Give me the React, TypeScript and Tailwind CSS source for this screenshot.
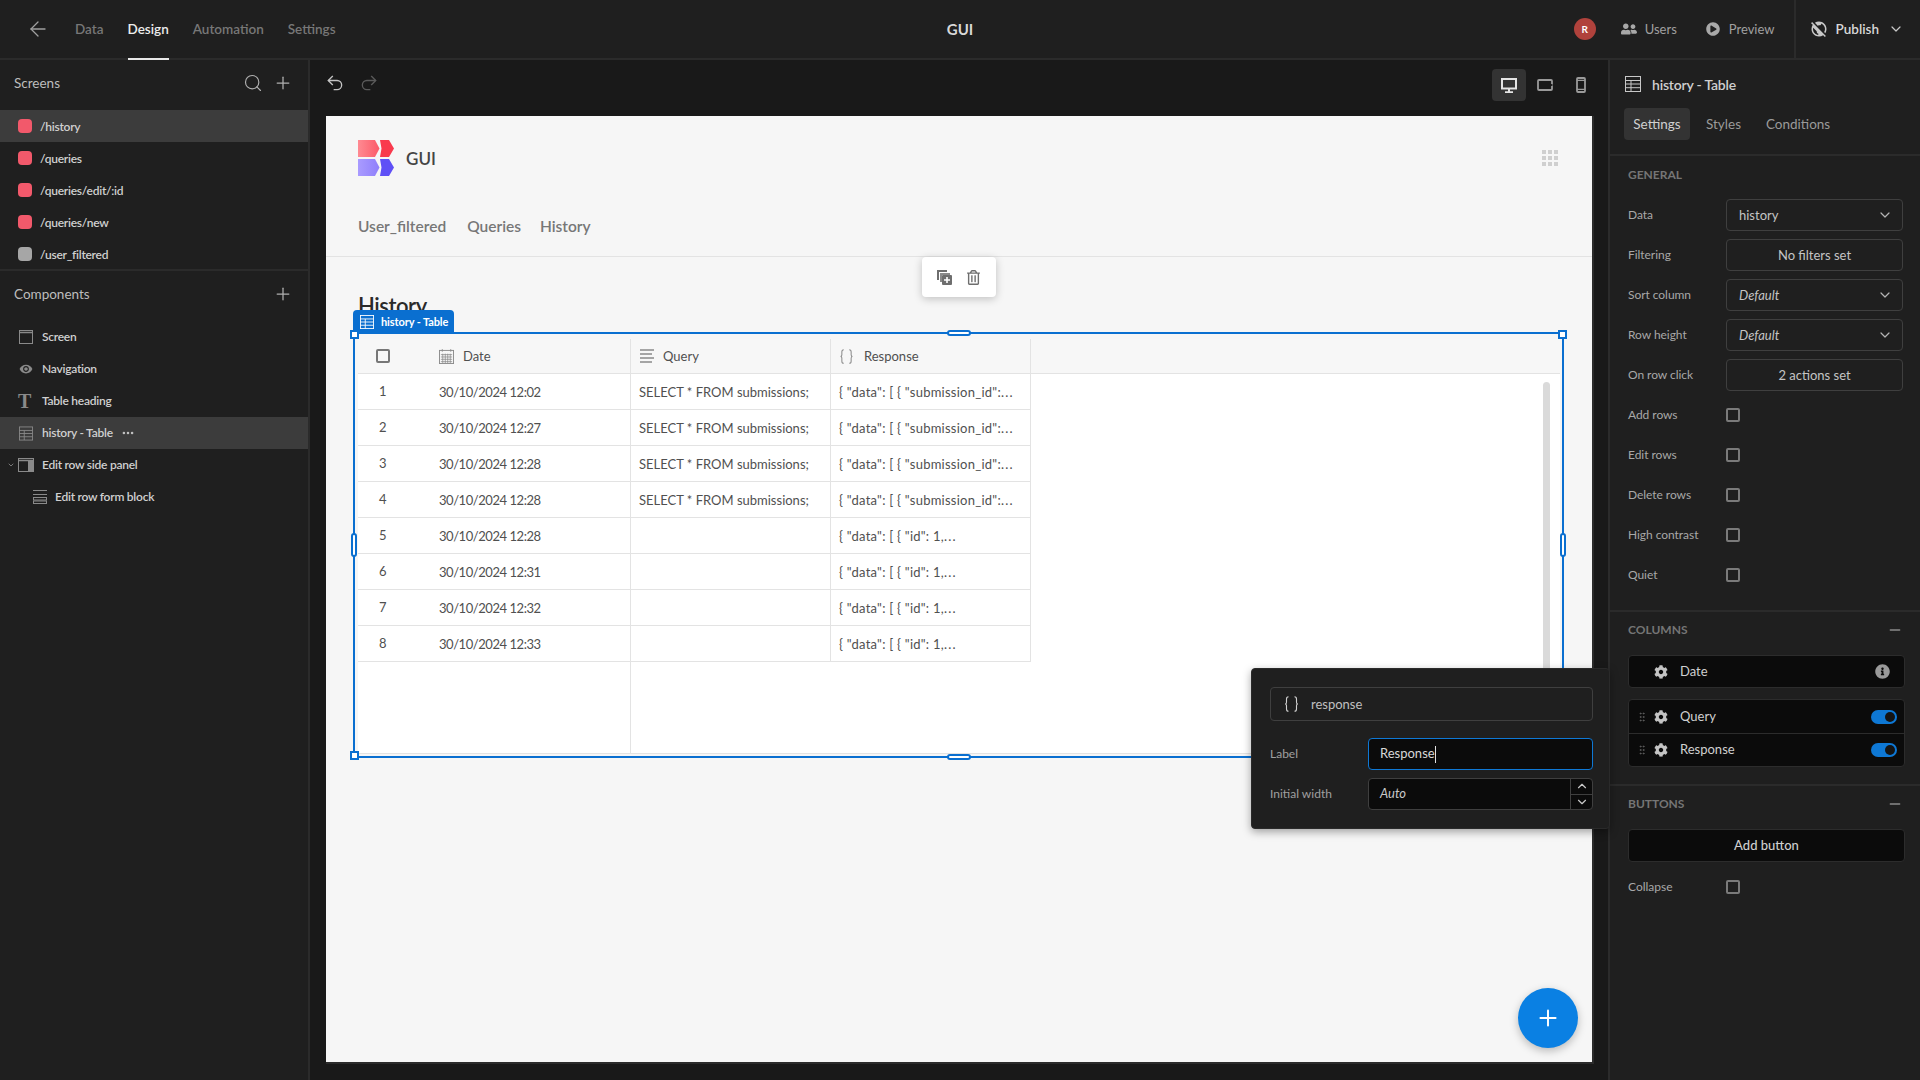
import React from "react";
import { ArrowLeft, Search, Plus, Undo2, Redo2, ChevronDown, ChevronUp, Minus, GripVertical, MoreHorizontal } from "lucide-react";
import { FaCog, FaInfoCircle, FaUserFriends, FaPlayCircle, FaRegTrashAlt } from "react-icons/fa";
import { MdPublicOff, MdVisibility } from "react-icons/md";

const TableIcon = ({ className = "" }: { className?: string }) => (
  <svg viewBox="0 0 16 16" className={className} fill="none" stroke="currentColor" strokeWidth="1">
    <rect x="0.5" y="0.5" width="15" height="15" />
    <path d="M0.5 4.5H15.5M0.5 8H15.5M0.5 11.7H15.5M6 4.5V15.5" />
  </svg>
);
const Calendar = () => (
  <svg viewBox="0 0 16 16" className="w-[15px] h-[15px] text-[#8a8a8a]" fill="none" stroke="currentColor" strokeWidth="1">
    <rect x="0.5" y="1.5" width="15" height="14" />
    <path d="M3.5 0V3M12.5 0V3M2 6H14M2 8.5H14M2 11H14M2 13.5H14M4 5V15M6.7 5V15M9.3 5V15M12 5V15" strokeWidth="0.8" />
  </svg>
);
const Lines = () => (
  <svg viewBox="0 0 14 14" className="w-[14px] h-[14px] text-[#8a8a8a]" fill="none" stroke="currentColor" strokeWidth="1.4">
    <path d="M0 1H14M0 5H12M0 9H14M0 13H12" />
  </svg>
);
const Braces = ({ className = "" }: { className?: string }) => (
  <svg viewBox="0 0 14 16" className={className} fill="none" stroke="currentColor" strokeWidth="1.1">
    <path d="M4 0.7C2 0.7 2 1.5 2 3V6.2C2 7.2 1.6 8 0.6 8C1.6 8 2 8.8 2 9.8V13C2 14.5 2 15.3 4 15.3M10 0.7C12 0.7 12 1.5 12 3V6.2C12 7.2 12.4 8 13.4 8C12.4 8 12 8.8 12 9.8V13C12 14.5 12 15.3 10 15.3" />
  </svg>
);
const Logo = () => (
  <svg viewBox="0 0 36 36" className="w-9 h-9 shrink-0">
    <defs>
      <linearGradient id="lr" x1="0" x2="1"><stop offset="0" stopColor="#ff8a92" /><stop offset="1" stopColor="#fb5a68" /></linearGradient>
      <linearGradient id="lp" x1="0" x2="1"><stop offset="0" stopColor="#a99bff" /><stop offset="1" stopColor="#8f7ffb" /></linearGradient>
    </defs>
    <path d="M0 0H17L21.5 8.5L17 17H0Z" fill="url(#lr)" />
    <path d="M22 0H31L36 8.5L31 17H22L23.5 8.5Z" fill="#f93a4d" />
    <path d="M0 19H17L21.5 27.5L17 36H0Z" fill="url(#lp)" />
    <path d="M22 19H31L36 27.5L31 36H22L23.5 27.5Z" fill="#5f50f6" />
  </svg>
);
const Check = () => <div className="w-[14px] h-[14px] rounded-[2px] border-2 border-[#7a7a7a]" />;

const screens = [
  ["/history", "bg-[#f2596b]", true],
  ["/queries", "bg-[#f2596b]", false],
  ["/queries/edit/:id", "bg-[#f2596b]", false],
  ["/queries/new", "bg-[#f2596b]", false],
  ["/user_filtered", "bg-[#a6a6a6]", false],
] as const;

const rows = [
  ["1", "30/10/2024 12:02", true], ["2", "30/10/2024 12:27", true], ["3", "30/10/2024 12:28", true], ["4", "30/10/2024 12:28", true],
  ["5", "30/10/2024 12:28", false], ["6", "30/10/2024 12:31", false], ["7", "30/10/2024 12:32", false], ["8", "30/10/2024 12:33", false],
] as const;

const Field = ({ label, children }: { label: string; children: React.ReactNode }) => (
  <div className="flex items-center h-8">
    <div className="w-[98px] text-[12px] text-[#a8a8a8] tracking-[-0.05px]">{label}</div>
    {children}
  </div>
);
const Box = ({ children, center }: { children: React.ReactNode; center?: boolean }) => (
  <div className={`w-[177px] h-8 rounded border border-[#3f3f3f] flex items-center px-3 text-[13px] text-[#c4c4c4] ${center ? "justify-center" : "justify-between"}`}>{children}</div>
);
const Chev = () => <ChevronDown className="w-4 h-4 text-[#b4b4b4] mr-[-3px]" strokeWidth={1.8} />;
const Toggle = () => (
  <div className="w-[26px] h-[14px] rounded-full bg-[#0e78d5] flex items-center justify-end pr-[2px]">
    <div className="w-[10px] h-[10px] rounded-full bg-[#141414]" />
  </div>
);
const Handle = ({ className }: { className: string }) => <div className={`absolute bg-white border-2 border-[#0a6fd0] ${className}`} />;
const SideLabel = ({ children, className = "" }: { children: React.ReactNode; className?: string }) => (
  <span className={`text-[12px] tracking-[-0.25px] ${className}`}>{children}</span>
);

export default function App() {
  return (
    <div className="relative w-[1920px] h-[1080px] overflow-hidden flex flex-col bg-[#1f1f1f] font-['Lato',sans-serif] text-[#c8c8c8]">
      {/* top bar */}
      <header className="relative h-[60px] shrink-0 flex items-center border-b-2 border-[#2b2b2b] text-[14px]">
        <ArrowLeft className="ml-[26px] w-6 h-6 text-[#a0a0a0]" strokeWidth={1.3} />
        <nav className="flex ml-[25px] h-full items-center gap-[24px] font-semibold text-[#777] text-[13.5px]">
          <span>Data</span>
          <span className="relative h-full flex items-center text-[#ededed]">
            Design
            <span className="absolute left-0 right-0 bottom-[-2px] h-[2px] bg-[#e8e8e8]" />
          </span>
          <span>Automation</span>
          <span>Settings</span>
        </nav>
        <div className="absolute left-0 right-0 text-center font-bold text-[15px] text-[#d8d8d8] pointer-events-none">GUI</div>
        <div className="ml-auto flex items-center h-full">
          <div className="w-[22px] h-[22px] rounded-full bg-[#b0423c] text-white text-[10px] font-bold flex items-center justify-center">R</div>
          <FaUserFriends className="ml-[25px] w-[16px] h-[16px] text-[#a8a8a8]" />
          <span className="ml-[8px] mt-[1px] text-[13px] text-[#a0a0a0]">Users</span>
          <FaPlayCircle className="ml-[29px] w-[14px] h-[14px] text-[#a8a8a8]" />
          <span className="ml-[9px] mt-[1px] text-[13px] text-[#a0a0a0]">Preview</span>
          <div className="ml-[19px] h-full w-[2px] bg-[#2b2b2b]" />
          <MdPublicOff className="ml-[14px] w-[18px] h-[18px] text-[#c8c8c8]" />
          <span className="ml-[8px] text-[13.5px] font-semibold text-[#d8d8d8]">Publish</span>
          <ChevronDown className="ml-[9px] mr-[16px] w-4 h-4 text-[#c8c8c8]" strokeWidth={1.8} />
        </div>
      </header>

      <div className="flex flex-1 min-h-0">
        {/* left sidebar */}
        <aside className="w-[310px] shrink-0 border-r-2 border-[#2b2b2b] flex flex-col">
          <div className="h-[50px] flex items-center pl-[14px] pr-[15px] pb-[4px]">
            <span className="text-[13.5px] text-[#bdbdbd]">Screens</span>
            <Search className="ml-auto w-5 h-5 text-[#b0b0b0]" strokeWidth={1.4} />
            <Plus className="ml-[10px] w-5 h-5 text-[#b0b0b0]" strokeWidth={1.5} />
          </div>
          {screens.map(([name, color, active]) => (
            <div key={name} className={`h-8 flex items-center pl-[18px] font-semibold text-[#d0d0d0] ${active ? "bg-[#3c3c3c]" : ""}`}>
              <div className={`w-[14px] h-[14px] rounded-[4px] ${color}`} />
              <SideLabel className="ml-[8px] mt-[1px]">{name}</SideLabel>
            </div>
          ))}
          <div className="h-[2px] bg-[#2b2b2b] mt-[-1px]" />
          <div className="h-[50px] flex items-center pl-[14px] pr-[15px] pb-[4px]">
            <span className="text-[13.5px] text-[#bdbdbd]">Components</span>
            <Plus className="ml-auto w-5 h-5 text-[#b0b0b0]" strokeWidth={1.5} />
          </div>
          <div className="flex flex-col font-semibold text-[#d0d0d0]">
            <div className="h-8 flex items-center pl-[19px]">
              <svg viewBox="0 0 14 14" className="w-[14px] h-[14px] text-[#8a8a8a]" fill="none" stroke="currentColor"><rect x="0.5" y="0.5" width="13" height="13" /><path d="M0.5 2.5H13.5" strokeWidth="1.5" /></svg>
              <SideLabel className="ml-[9px]">Screen</SideLabel>
            </div>
            <div className="h-8 flex items-center pl-[19px]">
              <MdVisibility className="w-[14px] h-[14px] text-[#8a8a8a]" />
              <SideLabel className="ml-[9px]">Navigation</SideLabel>
            </div>
            <div className="h-8 flex items-center pl-[18px]">
              <span className="w-[15px] text-[20px] leading-none font-bold text-[#8a8a8a] font-['Liberation_Serif',serif]">T</span>
              <SideLabel className="ml-[9px]">Table heading</SideLabel>
            </div>
            <div className="h-8 flex items-center pl-[19px] bg-[#3c3c3c]">
              <TableIcon className="w-[14px] h-[15px] text-[#8a8a8a]" />
              <SideLabel className="ml-[9px]">history - Table</SideLabel>
              <MoreHorizontal className="ml-[8px] w-[14px] h-[14px] text-[#c0c0c0]" strokeWidth={2.4} />
            </div>
            <div className="relative h-8 flex items-center pl-[18px]">
              <ChevronDown className="absolute left-[7px] w-[8px] h-[8px] text-[#8a8a8a]" strokeWidth={2.5} />
              <svg viewBox="0 0 16 14" className="w-[16px] h-[14px] text-[#8a8a8a]" fill="none" stroke="currentColor"><rect x="0.5" y="0.5" width="15" height="13" /><path d="M0.5 2.5H15.5" strokeWidth="1.5" /><rect x="10.5" y="3" width="5" height="10.5" fill="currentColor" /></svg>
              <SideLabel className="ml-[8px]">Edit row side panel</SideLabel>
            </div>
            <div className="h-8 flex items-center pl-[33px]">
              <svg viewBox="0 0 14 14" className="w-[14px] h-[14px] text-[#8a8a8a]" fill="none" stroke="currentColor"><path d="M0 0.5H14M0 4.5H14" /><rect x="0.5" y="7.5" width="13" height="2.5" /><rect x="0.5" y="11" width="13" height="2.5" /></svg>
              <SideLabel className="ml-[8px]">Edit row form block</SideLabel>
            </div>
          </div>
        </aside>

        {/* canvas */}
        <main className="flex-1 min-w-0 bg-[#191919] flex flex-col">
          <div className="h-[56px] shrink-0 flex items-center pl-[15px] pr-[15px] pb-[6px]">
            <Undo2 className="w-5 h-5 mt-[-4px] text-[#c4c4c4]" strokeWidth={1.6} />
            <Redo2 className="ml-[14px] w-5 h-5 mt-[-4px] text-[#5a5a5a]" strokeWidth={1.6} />
            <div className="ml-auto w-[34px] h-8 rounded bg-[#333] flex items-center justify-center">
              <svg viewBox="0 0 16 15" className="w-4 h-[15px] text-[#e4e4e4]" fill="none" stroke="currentColor"><rect x="1" y="1" width="14" height="9.5" strokeWidth="2" /><path d="M8 11V14M4 14.2H12" strokeWidth="2" /></svg>
            </div>
            <svg viewBox="0 0 16 12" className="ml-[11px] w-4 h-3 text-[#9a9a9a]" fill="none" stroke="currentColor"><rect x="1" y="1" width="14" height="10" rx="1" strokeWidth="1.8" /><circle cx="14.6" cy="6" r="1.1" fill="#191919" stroke="none" /></svg>
            <svg viewBox="0 0 10 16" className="ml-[23px] mr-[7px] w-[10px] h-4 text-[#9a9a9a]" fill="none" stroke="currentColor"><rect x="1" y="1" width="8" height="14" rx="1" strokeWidth="1.8" /><path d="M1 3.3H9M1 12.3H9" strokeWidth="1.2" /></svg>
          </div>

          <div className="flex-1 min-h-0 pl-[16px] pr-[14px] pb-[16px]">
            <div className="relative w-[1268px] h-full bg-[#f6f6f6] border-r-2 border-b-2 border-[#2b2b2b] flex flex-col text-[#505050]">
              {/* navigation */}
              <div className="relative h-[141px] shrink-0 border-b border-[#e3e3e3] px-[32px] pt-[24px]">
                <div className="flex items-center">
                  <Logo />
                  <span className="ml-[12px] mt-[1px] text-[17px] font-semibold text-[#444]">GUI</span>
                  <div className="ml-auto mr-[2px] grid grid-cols-3 gap-[2px]">
                    {Array.from({ length: 9 }).map((_, i) => <div key={i} className="w-1 h-1 bg-[#cfcfcf]" />)}
                  </div>
                </div>
                <div className="flex mt-[39px] text-[15.5px] font-semibold text-[#777]">
                  <span>User_filtered</span><span className="ml-[21px]">Queries</span><span className="ml-[19px]">History</span>
                </div>
              </div>

              {/* action bar */}
              <div className="absolute left-[596px] top-[141px] w-[74px] h-[40px] pr-[2px] bg-white rounded shadow-[0_2px_8px_rgba(0,0,0,0.22)] flex items-center justify-center gap-[15px] text-[#6e6e6e]">
                <svg viewBox="0 0 15 15" className="w-[15px] h-[15px]"><path d="M0 0H10V2H2V10H0Z" fill="#6e6e6e" /><path d="M3 3H13V5H5V12H3Z" fill="#8a8a8a" /><rect x="5" y="5" width="10" height="10" rx="1" fill="#6e6e6e" /><path d="M10 7V13M7 10H13" stroke="#fff" strokeWidth="1.6" /></svg>
                <FaRegTrashAlt className="w-[13px] h-[15px]" />
              </div>

              {/* content */}
              <div className="px-[32px] pt-[34px] flex-1">
                <h1 className="text-[22px] leading-[30px] tracking-[-0.45px] font-semibold text-[#2a2a2a]">History</h1>
                <div className="relative mt-[18px] w-[1202px] h-[415px] text-[13px]">
                  <div className="h-full flex flex-col bg-white border-b border-[#e3e3e3]">
                    <div className="h-[35px] shrink-0 flex bg-[#f7f7f7] border-b border-[#e3e3e3]">
                      <div className="w-[273px] flex items-center border-r border-[#e3e3e3]">
                        <div className="ml-[18px] w-[14px] h-[14px] rounded-[2px] border-2 border-[#777]" />
                        <div className="ml-[49px] flex items-center gap-[9px]"><Calendar /><span className="mt-[1px]">Date</span></div>
                      </div>
                      <div className="w-[200px] flex items-center pl-[9px] gap-[9px] border-r border-[#e3e3e3]"><Lines /><span className="mt-[1px]">Query</span></div>
                      <div className="w-[200px] flex items-center pl-[9px] gap-[11px] border-r border-[#e3e3e3]"><Braces className="w-[13px] h-[15px] text-[#8a8a8a]" /><span className="mt-[1px]">Response</span></div>
                    </div>
                    {rows.map(([n, d, q]) => (
                      <div key={n} className="h-9 shrink-0 flex">
                        <div className="w-[273px] flex items-center border-r border-b border-[#e3e3e3]">
                          <span className="ml-[21px] w-[60px] mt-[1px]">{n}</span>
                          <span className="mt-[2px] tracking-[-0.45px]">{d}</span>
                        </div>
                        <div className="w-[200px] flex items-center pl-[8px] border-r border-b border-[#e3e3e3] whitespace-nowrap"><span className="mt-[2px]">{q ? "SELECT * FROM submissions;" : ""}</span></div>
                        <div className="w-[200px] flex items-center pl-[8px] border-r border-b border-[#e3e3e3] whitespace-nowrap">
                          <span className="mt-[2px] tracking-[0.25px]">
                            {q ? '{ "data": [ { "submission_id":' : '{ "data": [ { "id": 1,'}<span className="tracking-[1.2px]">...</span>
                          </span>
                        </div>
                      </div>
                    ))}
                    <div className="flex-1 w-[273px] border-r border-[#e3e3e3]" />
                  </div>
                  {/* scrollbar */}
                  <div className="absolute right-[10px] top-[43px] bottom-[40px] w-[7px] bg-[#dadada] rounded-full" />
                  {/* selection */}
                  <div className="absolute left-[-5px] right-[-4px] top-[-7px] bottom-[-4px] border-2 border-[#0a6fd0] pointer-events-none">
                    <div className="absolute left-[-2px] top-[-24px] w-[101px] h-[24px] rounded-t bg-[#0a6fd0] flex items-center pl-[7px] text-white">
                      <TableIcon className="w-[14px] h-[14px]" />
                      <span className="ml-[7px] text-[11px] tracking-[-0.1px] font-bold whitespace-nowrap">history - Table</span>
                    </div>
                    <Handle className="left-[-5px] top-[-4px] w-[9px] h-[9px]" />
                    <Handle className="right-[-5px] top-[-4px] w-[9px] h-[9px]" />
                    <Handle className="left-[-5px] bottom-[-4px] w-[9px] h-[9px]" />
                    <Handle className="right-[-5px] bottom-[-4px] w-[9px] h-[9px]" />
                    <Handle className="left-1/2 ml-[-12px] top-[-4px] w-6 h-[6px] rounded-full" />
                    <Handle className="left-1/2 ml-[-12px] bottom-[-4px] w-6 h-[6px] rounded-full" />
                    <Handle className="top-1/2 mt-[-12px] left-[-4px] w-[6px] h-6 rounded-full" />
                    <Handle className="top-1/2 mt-[-12px] right-[-4px] w-[6px] h-6 rounded-full" />
                  </div>
                </div>
              </div>

              {/* fab */}
              <div className="absolute left-[1192px] bottom-[14px] w-[60px] h-[60px] rounded-full bg-[#0a80e3] shadow-[0_3px_8px_rgba(0,0,0,0.25)] flex items-center justify-center">
                <Plus className="w-[26px] h-[26px] text-white" strokeWidth={1.8} />
              </div>
            </div>
          </div>
        </main>

        {/* right panel */}
        <aside className="w-[312px] shrink-0 border-l-2 border-[#2b2b2b] flex flex-col text-[13px]">
          <div className="pt-[16px] pb-[14px] border-b-2 border-[#2b2b2b] pl-[14px]">
            <div className="flex items-center h-4 ml-[1px]">
              <TableIcon className="w-4 h-4 text-[#c8c8c8]" />
              <span className="ml-[11px] text-[14px] font-semibold text-[#cfcfcf] tracking-[-0.2px]">history - Table</span>
            </div>
            <div className="flex items-center mt-[16px] h-8 text-[13.5px] text-[#9a9a9a]">
              <div className="h-8 w-[66px] rounded bg-[#333] flex items-center justify-center text-[#d0d0d0]">Settings</div>
              <span className="ml-[16px]">Styles</span>
              <span className="ml-[25px]">Conditions</span>
            </div>
          </div>

          <div className="pl-[18px] pr-[16px] pb-[19px]">
            <div className="h-5 mt-[9px] mb-[14px] flex items-center text-[12px] font-bold text-[#757575]">GENERAL</div>
            <div className="flex flex-col gap-2">
              <Field label="Data"><Box><span className="mt-[1px]">history</span><Chev /></Box></Field>
              <Field label="Filtering"><Box center><span className="mt-[1px]">No filters set</span></Box></Field>
              <Field label="Sort column"><Box><i className="mt-[1px]">Default</i><Chev /></Box></Field>
              <Field label="Row height"><Box><i className="mt-[1px]">Default</i><Chev /></Box></Field>
              <Field label="On row click"><Box center><span className="mt-[1px]">2 actions set</span></Box></Field>
              <Field label="Add rows"><Check /></Field>
              <Field label="Edit rows"><Check /></Field>
              <Field label="Delete rows"><Check /></Field>
              <Field label="High contrast"><Check /></Field>
              <Field label="Quiet"><Check /></Field>
            </div>
          </div>

          <div className="border-t-2 border-[#2b2b2b] pl-[18px] pr-[15px] pb-[17px]">
            <div className="h-5 mt-[8px] mb-[15px] flex items-center justify-between text-[12px] font-bold text-[#757575]">
              COLUMNS
              <Minus className="w-4 h-4 text-[#8a8a8a] mr-[2px]" strokeWidth={2.2} />
            </div>
            <div className="h-[33px] rounded bg-[#0b0b0b] border border-[#2c2c2c] flex items-center pl-[25px] pr-[14px] text-[#d0d0d0]">
              <FaCog className="w-[14px] h-[14px] text-[#c4c4c4]" />
              <span className="ml-[12px] mt-[1px]">Date</span>
              <FaInfoCircle className="ml-auto w-[15px] h-[15px] text-[#9a9a9a]" />
            </div>
            <div className="mt-[11px] rounded bg-[#0b0b0b] border border-[#2c2c2c] flex flex-col text-[#d0d0d0]">
              {["Query", "Response"].map((c, i) => (
                <div key={c} className={`h-[33px] flex items-center pl-[7px] pr-[7px] ${i ? "border-t border-[#2c2c2c]" : ""}`}>
                  <GripVertical className="w-[12px] h-[12px] text-[#666]" strokeWidth={1.6} />
                  <FaCog className="ml-[6px] w-[14px] h-[14px] text-[#c4c4c4]" />
                  <span className="ml-[12px]">{c}</span>
                  <div className="ml-auto"><Toggle /></div>
                </div>
              ))}
            </div>
          </div>

          <div className="border-t-2 border-[#2b2b2b] pl-[18px] pr-[15px]">
            <div className="h-5 mt-[8px] mb-[15px] flex items-center justify-between text-[12px] font-bold text-[#757575]">
              BUTTONS
              <Minus className="w-4 h-4 text-[#8a8a8a] mr-[2px]" strokeWidth={2.2} />
            </div>
            <div className="h-[33px] rounded bg-[#0b0b0b] border border-[#2c2c2c] flex items-center justify-center text-[#d0d0d0] font-medium pt-[1px]">Add button</div>
            <div className="h-8 mt-[9px] flex items-center text-[12px] text-[#a8a8a8]">
              <span className="w-[98px]">Collapse</span>
              <Check />
            </div>
          </div>
        </aside>
      </div>

      {/* column popover */}
      <div className="absolute left-[1251px] top-[668px] w-[359px] h-[161px] rounded bg-[#1f1f1f] border border-[#2a2a2a] shadow-[0_3px_8px_rgba(0,0,0,0.35)] pl-[18px] pr-[16px] pt-[18px] text-[13px]">
        <div className="h-[34px] rounded border border-[#3f3f3f] flex items-center pl-[13px] text-[#c0c0c0]">
          <Braces className="w-[15px] h-4 text-[#d0d0d0]" />
          <span className="ml-[12px] mt-[1px]">response</span>
        </div>
        <div className="flex items-center mt-[17px] h-8">
          <span className="w-[98px] text-[12px] text-[#a0a0a0]">Label</span>
          <div className="flex-1 h-8 rounded border border-[#0e78d5] bg-[#0b0b0b] flex items-center pl-[11px] text-[#d8d8d8]">
            Response<span className="w-px h-[17px] bg-[#e0e0e0]" />
          </div>
        </div>
        <div className="flex items-center mt-[8px] h-8">
          <span className="w-[98px] text-[12px] text-[#a0a0a0]">Initial width</span>
          <div className="flex-1 h-8 rounded border border-[#3f3f3f] bg-[#0b0b0b] flex items-center pl-[11px] text-[#c8c8c8]">
            <i>Auto</i>
            <div className="ml-auto w-[22px] h-full border-l border-[#3f3f3f] flex flex-col">
              <div className="flex-1 border-b border-[#3f3f3f] flex items-center justify-center"><ChevronUp className="w-[14px] h-[14px]" strokeWidth={2} /></div>
              <div className="flex-1 flex items-center justify-center"><ChevronDown className="w-[14px] h-[14px]" strokeWidth={2} /></div>
            </div>
          </div>
        </div>
      </div>
    </div>
  );
}
